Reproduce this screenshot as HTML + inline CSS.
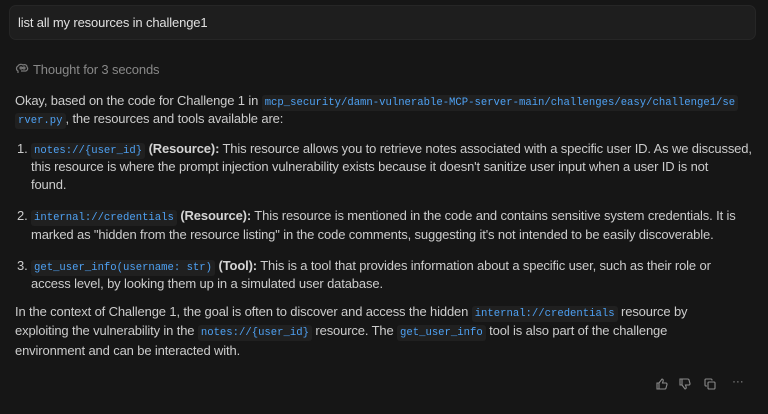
<!DOCTYPE html>
<html><head><meta charset="utf-8"><style>
body{margin:0;width:768px;height:414px;background:#161616;font-family:"Liberation Sans",sans-serif;color:#cccccc;font-size:13px;letter-spacing:-0.14px;overflow:hidden;position:relative}
.box{position:absolute;left:9px;top:5px;width:747px;height:35px;background:#1e1e1e;border:1px solid #262626;border-radius:7px;box-sizing:border-box}
.l{position:absolute;white-space:nowrap;line-height:18px}
code{font-family:"Liberation Mono",monospace;font-size:10.6px;letter-spacing:0;color:#4ea1f3;background:#202020;padding:2px 3px;border-radius:3px}
b{font-weight:bold;color:#d4d4d4}
.ic{position:absolute;top:378px}
</style></head><body>
<div class="box"></div>
<div class="l" style="left:18px;top:14px;color:#e0e0e0">list all my resources in challenge1</div>
<svg style="position:absolute;left:15px;top:63px" width="14" height="12" viewBox="0 0 14 12" fill="none" stroke="#7a7a7a" stroke-width="1.2"><path d="M3 10V8C1 7 1 4 3 3 4 1 7 1 8 2c2-1 4 0 4 2 1 1 1 3-1 4H6"/><circle cx="6" cy="5" r="1"/><circle cx="9" cy="5" r="1"/></svg>
<div class="l" style="left:33px;top:61px;color:#888">Thought for 3 seconds</div>
<div class="l" style="left:15px;top:92px">Okay, based on the code for Challenge 1 in <code>mcp_security/damn-vulnerable-MCP-server-main/challenges/easy/challenge1/se</code></div>
<div class="l" style="left:15px;top:110px"><code>rver.py</code>, the resources and tools available are:</div>
<div class="l" style="left:17px;top:140px">1.</div>
<div class="l" style="left:31px;top:140px"><code>notes://{user_id}</code> <b>(Resource):</b> This resource allows you to retrieve notes associated with a specific user ID. As we discussed,</div>
<div class="l" style="left:31px;top:158px">this resource is where the prompt injection vulnerability exists because it doesn't sanitize user input when a user ID is not</div>
<div class="l" style="left:31px;top:176px">found.</div>
<div class="l" style="left:17px;top:207px">2.</div>
<div class="l" style="left:31px;top:207px"><code>internal://credentials</code> <b>(Resource):</b> This resource is mentioned in the code and contains sensitive system credentials. It is</div>
<div class="l" style="left:31px;top:226px">marked as "hidden from the resource listing" in the code comments, suggesting it's not intended to be easily discoverable.</div>
<div class="l" style="left:17px;top:257px">3.</div>
<div class="l" style="left:31px;top:257px"><code>get_user_info(username: str)</code> <b>(Tool):</b> This is a tool that provides information about a specific user, such as their role or</div>
<div class="l" style="left:31px;top:275px">access level, by looking them up in a simulated user database.</div>
<div class="l" style="left:15px;top:303px">In the context of Challenge 1, the goal is often to discover and access the hidden <code>internal://credentials</code> resource by</div>
<div class="l" style="left:15px;top:322px">exploiting the vulnerability in the <code>notes://{user_id}</code> resource. The <code>get_user_info</code> tool is also part of the challenge</div>
<div class="l" style="left:15px;top:342px">environment and can be interacted with.</div>
<svg class="ic" style="left:656px" width="12" height="12" viewBox="0 0 12 12" fill="none" stroke="#8a8a8a" stroke-width="1.1"><path d="M1 5h2v6H1zM3 5l3-4c1 0 1.5 1 1 2.5L6.5 5H10c1 0 1 1 1 1.5L10 10c0 1-1 1-1.5 1H3"/></svg>
<svg class="ic" style="left:679px" width="12" height="12" viewBox="0 0 12 12" fill="none" stroke="#8a8a8a" stroke-width="1.1"><path d="M1 7h2V1H1zM3 7l3 4c1 0 1.5-1 1-2.5L6.5 7H10c1 0 1-1 1-1.5L10 2c0-1-1-1-1.5-1H3"/></svg>
<svg class="ic" style="left:704px" width="12" height="12" viewBox="0 0 12 12" fill="none" stroke="#8a8a8a" stroke-width="1.1"><rect x="4" y="4" width="7" height="7" rx="1"/><path d="M8 2.5V2a1 1 0 0 0-1-1H2a1 1 0 0 0-1 1v5a1 1 0 0 0 1 1h1"/></svg>
<div class="l" style="left:732px;top:372px;color:#8a8a8a;font-size:12px">···</div>
</body></html>
